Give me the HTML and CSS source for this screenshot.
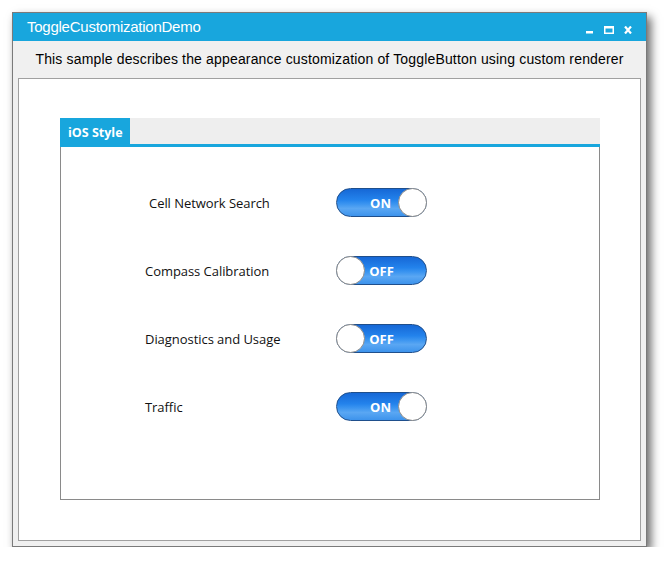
FILE: index.html
```html
<!DOCTYPE html>
<html>
<head>
<meta charset="utf-8">
<link rel="stylesheet" href="styles.css">
</head>
<body>
<div class="window">
  <div class="titlebar">
    <span class="title">ToggleCustomizationDemo</span>
    <div class="controls">
      <svg width="8" height="8" viewBox="0 0 8 8"><rect x="0" y="5" width="7" height="2.5" fill="#fff"/></svg>
      <svg width="10" height="8" viewBox="0 0 10 8"><rect x="0.75" y="0.75" width="8.5" height="6.5" fill="none" stroke="#fff" stroke-width="1.5"/><rect x="0" y="0" width="10" height="2.5" fill="#fff"/></svg>
      <svg width="8" height="8" viewBox="0 0 8 8"><path d="M1 0.5 L7 7.5 M7 0.5 L1 7.5" stroke="#fff" stroke-width="2.2"/></svg>
    </div>
  </div>
  <div class="description">This sample describes the appearance customization of ToggleButton using custom renderer</div>
  <div class="panel">
    <div class="tabcontrol">
      <div class="tabstrip">
        <div class="tab">iOS Style</div>
      </div>
      <div class="tabcontent">
        <div class="row">
          <span class="label label-first">Cell Network Search</span>
          <div class="toggle on"><span class="toggle-text">ON</span><span class="knob"></span></div>
        </div>
        <div class="row">
          <span class="label">Compass Calibration</span>
          <div class="toggle off"><span class="knob"></span><span class="toggle-text">OFF</span></div>
        </div>
        <div class="row">
          <span class="label">Diagnostics and Usage</span>
          <div class="toggle off"><span class="knob"></span><span class="toggle-text">OFF</span></div>
        </div>
        <div class="row">
          <span class="label">Traffic</span>
          <div class="toggle on"><span class="toggle-text">ON</span><span class="knob"></span></div>
        </div>
      </div>
    </div>
  </div>
</div>
</body>
</html>
```
FILE: styles.css
```css
* { box-sizing: border-box; }
html, body { margin: 0; padding: 0; background: #ffffff; }
body { padding: 12px 0 0 12px; }

.window {
  width: 635px;
  height: 535px;
  border: 1px solid #7a7a7a;
  background: #f0f0f0;
  box-shadow: 4px 5px 9px rgba(0, 0, 0, 0.6);
  display: flex;
  flex-direction: column;
}

.titlebar {
  height: 28px;
  background: #18a6dd;
  display: flex;
  align-items: center;
  padding: 0 14px 0 14px;
  flex: none;
}
.title {
  font-family: "Liberation Sans", Arial, sans-serif;
  font-size: 15px;
  color: #ffffff;
  letter-spacing: -0.25px;
  margin-top: -1px;
}
.controls {
  margin-left: auto;
  display: flex;
  align-items: flex-end;
  gap: 10px;
  padding-top: 5px;
}
.controls svg { display: block; }

.description {
  height: 37px;
  flex: none;
  display: flex;
  align-items: center;
  justify-content: center;
  font-family: "Liberation Sans", Arial, sans-serif;
  font-size: 14px;
  letter-spacing: 0.16px;
  color: #000;
  padding-bottom: 1px;
}

.panel {
  margin: 0 5px 5px 5px;
  flex: 1;
  border: 1px solid #a0a0a0;
  background: #ffffff;
  padding: 39px 40px 0 41px;
}

.tabcontrol {
  width: 540px;
  height: 382px;
  display: flex;
  flex-direction: column;
}
.tabstrip {
  height: 29px;
  background: #eeeeee;
  border-bottom: 3px solid #18a6dd;
  display: flex;
  flex: none;
}
.tab {
  width: 70px;
  background: #18a6dd;
  color: #ffffff;
  font-family: "Open Sans", "Noto Sans", sans-serif;
  font-weight: 700;
  font-size: 12.5px;
  display: flex;
  align-items: center;
  padding-left: 8px;
  padding-top: 2px;
}
.tabcontent {
  flex: 1;
  border: 1px solid #8a8a8a;
  border-top: none;
  padding: 41px 0 0 84px;
  display: flex;
  flex-direction: column;
  gap: 39px;
}

.row {
  display: flex;
  align-items: center;
  height: 29px;
}
.label {
  width: 191px;
  font-family: "Open Sans", "Noto Sans", sans-serif;
  font-size: 13px;
  color: #111;
  letter-spacing: -0.05px;
}
.label-first { padding-left: 4px; }

.toggle {
  width: 91px;
  height: 29px;
  border-radius: 15px;
  border: 1px solid #1f4f8c;
  background: linear-gradient(to bottom, #1668d6 0%, #2383ec 40%, #3a94f0 55%, #5aa7f3 72%, #3d93ec 100%);
  display: flex;
  align-items: center;
}
.toggle .knob {
  width: 29px;
  height: 29px;
  border-radius: 50%;
  background: #ffffff;
  border: 1px solid #8a8a8a;
  flex: none;
}
.toggle.on .knob { margin-right: -1px; }
.toggle.off .knob { margin-left: -1px; }
.toggle-text {
  flex: 1;
  text-align: center;
  color: #ffffff;
  font-family: "Open Sans", "Noto Sans", sans-serif;
  font-weight: 700;
  font-size: 13px;
}
.toggle.on .toggle-text { padding-left: 26px; }
.toggle.off .toggle-text { padding-right: 28px; }
```
